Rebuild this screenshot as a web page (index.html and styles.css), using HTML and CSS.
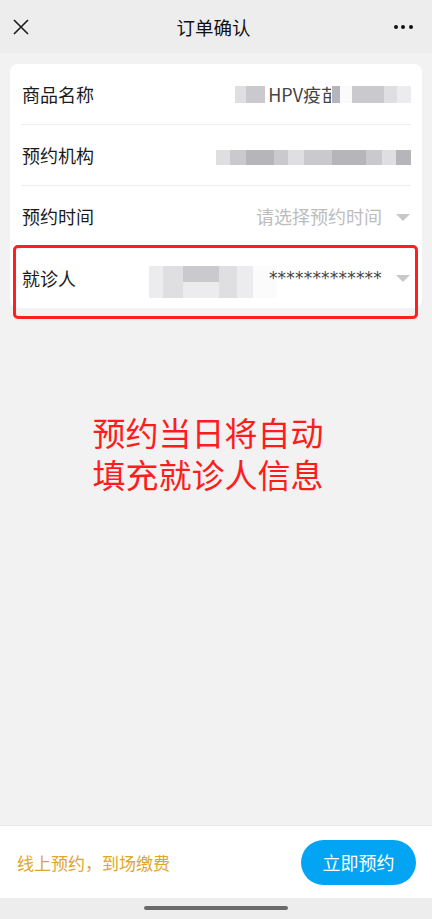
FILE: index.html
```html
<!DOCTYPE html>
<html lang="zh-CN">
<head>
  <meta charset="UTF-8">
  <meta name="viewport" content="width=device-width, initial-scale=1.0">
  <title>订单确认</title>
  <link rel="stylesheet" href="styles.css">
</head>
<body>

<div class="page">
  <div class="topbar">
    <svg class="close" width="16" height="16" viewBox="0 0 16 16">
      <path d="M1 1 L15 15 M15 1 L1 15" stroke="#1c1c1c" stroke-width="1.6" fill="none"/>
    </svg>
    <div class="title">订单确认</div>
    <div class="more"><span></span><span></span><span></span></div>
  </div>

  <div class="main">
    <div class="card">
      <div class="row">
        <div class="label">商品名称</div>
        <div class="value">
          <span class="mos m-l" style="width:11px"></span>
          <span class="mos m-g" style="width:19px"></span>
          <span class="txt">HPV疫<span class="cut">苗</span></span>
          <span class="mos m-d" style="width:8px"></span>
          <span class="mos m-w" style="width:12px"></span>
          <span class="mos m-g" style="width:32px"></span>
          <span class="mos m-l" style="width:13px"></span>
          <span class="mos m-x" style="width:14px"></span>
        </div>
      </div>
      <div class="row">
        <div class="label">预约机构</div>
        <div class="value">
          <div class="mosaic">
            <span class="mos m-l" style="width:14px"></span>
            <span class="mos m-g" style="width:16px"></span>
            <span class="mos m-d" style="width:28px"></span>
            <span class="mos m-g" style="width:14px"></span>
            <span class="mos m-l" style="width:16px"></span>
            <span class="mos m-g" style="width:28px"></span>
            <span class="mos m-d" style="width:34px"></span>
            <span class="mos m-g" style="width:16px"></span>
            <span class="mos m-l" style="width:14px"></span>
            <span class="mos m-d" style="width:15px"></span>
          </div>
        </div>
      </div>
      <div class="row">
        <div class="label">预约时间</div>
        <div class="value">
          <span class="hint">请选择预约时间</span>
          <span class="arrow"></span>
        </div>
      </div>
      <div class="row last">
        <div class="label">就诊人</div>
        <div class="value">
          <div class="mosaic tall">
            <div class="line">
              <span class="mos m-x" style="width:14px"></span>
              <span class="mos m-l" style="width:20px"></span>
              <span class="mos m-g" style="width:36px"></span>
              <span class="mos m-l" style="width:18px"></span>
              <span class="mos m-x" style="width:16px"></span>
              <span class="mos m-w" style="width:24px"></span>
            </div>
            <div class="line">
              <span class="mos m-x" style="width:14px"></span>
              <span class="mos m-l" style="width:20px"></span>
              <span class="mos m-x" style="width:36px"></span>
              <span class="mos m-l" style="width:18px"></span>
              <span class="mos m-x" style="width:16px"></span>
              <span class="mos m-w" style="width:24px"></span>
            </div>
          </div>
          <span class="stars">*************</span>
          <span class="arrow"></span>
        </div>
        <div class="mark"></div>
      </div>
    </div>

    <div class="note">预约当日将自动<br>填充就诊人信息</div>
  </div>

  <div class="footer">
    <div class="tip">线上预约，到场缴费</div>
    <button type="button" class="btn">立即预约</button>
  </div>
  <div class="home"><span></span></div>
</div>

</body>
</html>
```

FILE: styles.css
```css
body {
  margin: 0;
  padding: 0;
  font-family: "Noto Sans CJK SC", "Noto Sans", sans-serif;
  background-color: #f2f2f2;
}

.page {
  height: 919px;
  display: flex;
  flex-direction: column;
}

.topbar {
  height: 53px;
  flex: none;
  background-color: #ededed;
  display: flex;
  align-items: center;
  justify-content: space-between;
  padding: 0 19px 0 13px;
}

.close {
  display: block;
  margin-top: 1px;
}

.title {
  font-size: 18.5px;
  color: #111111;
  margin-left: 4px;
}

.more {
  display: flex;
  gap: 3.5px;
}

.more span {
  width: 4px;
  height: 4px;
  border-radius: 50%;
  background-color: #111111;
}

.main {
  flex: 1;
  padding: 11px 10px 0;
}

.card {
  background-color: #ffffff;
  border-radius: 8px;
  padding: 0 11px;
}

.row {
  position: relative;
  height: 60px;
  display: flex;
  align-items: center;
  justify-content: space-between;
  border-bottom: 1px solid #eeeeee;
}

.row.last {
  border-bottom: none;
  height: 61px;
}

.label {
  font-size: 18px;
  color: #1b1b1b;
  padding-left: 1px;
}

.value {
  display: flex;
  align-items: center;
  font-size: 18px;
  color: #333333;
}

.mos {
  display: inline-block;
  height: 17px;
}

.m-w { background-color: #fbfbfb; }
.m-x { background-color: #ececee; }
.m-l { background-color: #dfdfe2; }
.m-g { background-color: #c9c9ce; }
.m-d { background-color: #b5b5ba; }

.txt {
  color: #444444;
  padding: 0 1px 0 3px;
  line-height: 18px;
}

.cut {
  display: inline-block;
  width: 10px;
  overflow: hidden;
  vertical-align: top;
}

.mosaic {
  display: flex;
  margin-top: 4px;
}

.mosaic .mos {
  height: 15px;
}

.mosaic.tall {
  flex-direction: column;
  margin-top: 8px;
}

.mosaic.tall .line {
  display: flex;
}

.mosaic.tall .mos {
  height: 16px;
}

.hint {
  color: #bdbdbd;
  font-size: 18px;
}

.stars {
  font-family: "DejaVu Sans", sans-serif;
  font-size: 17px;
  color: #444444;
  letter-spacing: 0.2px;
  margin-left: -8px;
}

.arrow {
  width: 0;
  height: 0;
  border-left: 7px solid transparent;
  border-right: 7px solid transparent;
  border-top: 7px solid #c8c8c8;
  margin-left: 14px;
  margin-right: 1px;
  margin-top: 2px;
}

/* red annotation box over the patient row */
.mark {
  position: absolute;
  left: -8px;
  top: -2px;
  width: 399px;
  height: 68px;
  border: 3px solid #ff1f1f;
  border-radius: 5px;
}

.note {
  margin-top: 103px;
  margin-right: 16px;
  text-align: center;
  font-size: 33px;
  line-height: 42px;
  color: #ff1c1c;
}

.footer {
  height: 72px;
  flex: none;
  background-color: #ffffff;
  border-top: 1px solid #e6e6e6;
  display: flex;
  align-items: center;
  justify-content: space-between;
  padding: 0 16px 0 17px;
}

.tip {
  font-size: 17px;
  color: #e0a62a;
}

.btn {
  width: 115px;
  height: 45px;
  border: none;
  border-radius: 23px;
  background-color: #03a4f4;
  color: #ffffff;
  font-family: "Noto Sans CJK SC", sans-serif;
  font-size: 18px;
  cursor: pointer;
}

.home {
  height: 21px;
  flex: none;
  background-color: #ededed;
  display: flex;
  justify-content: center;
  padding-top: 8px;
  box-sizing: border-box;
}

.home span {
  width: 144px;
  height: 4px;
  border-radius: 2px;
  background-color: #6a6a6a;
}
```
